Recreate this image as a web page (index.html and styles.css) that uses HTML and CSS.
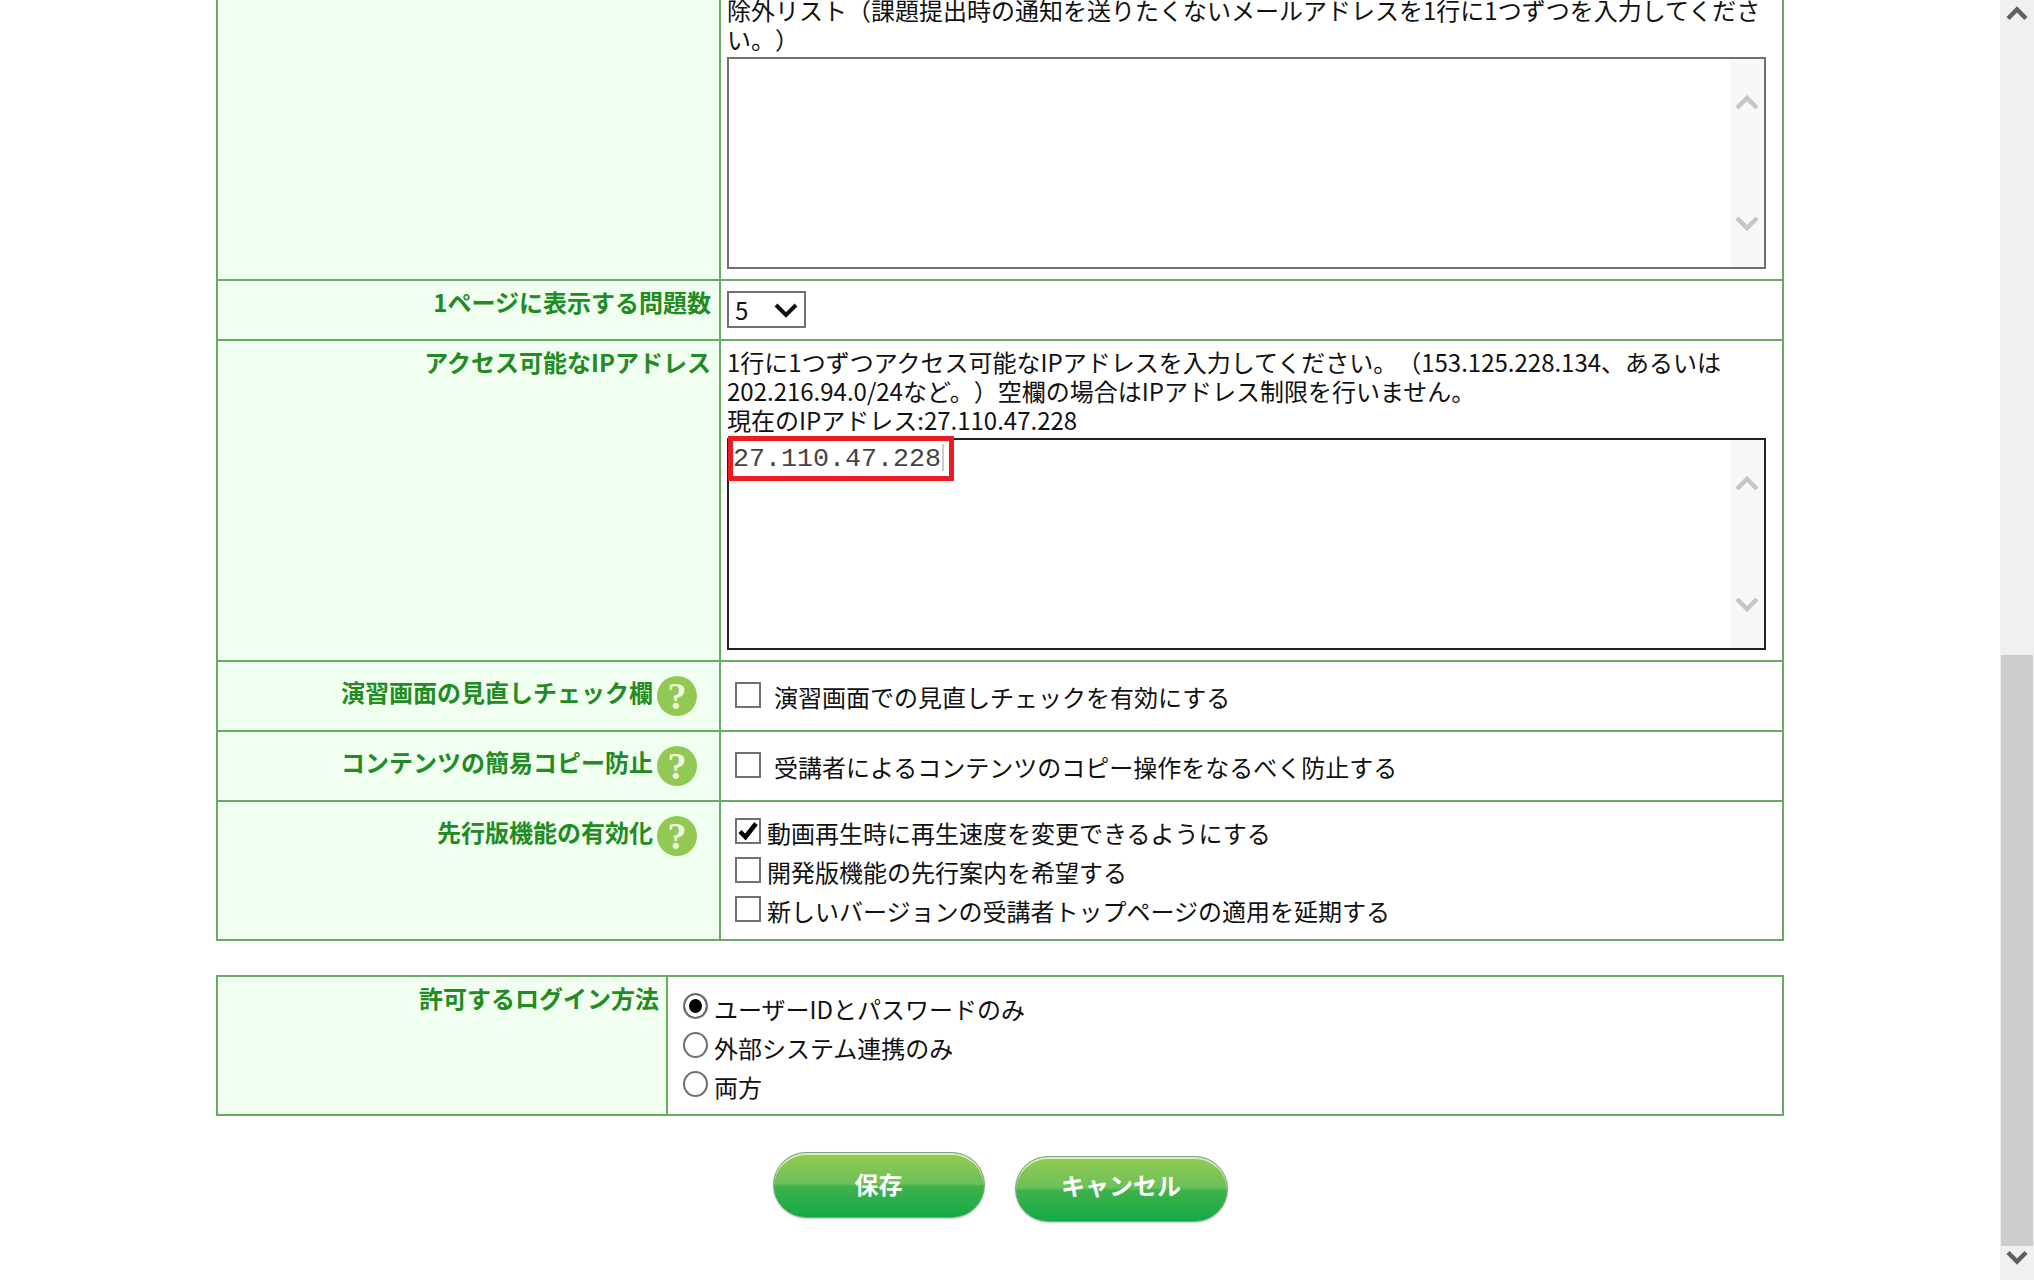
FILE: index.html
```html
<!DOCTYPE html>
<html lang="ja">
<head>
<meta charset="utf-8">
<title>設定</title>
<link rel="stylesheet" href="styles.css">
</head>
<body>
<div class="page">
  <main class="main">
    <table class="form-table first">
      <colgroup><col class="col-a"><col></colgroup>
      <tr class="r-exclude">
        <th></th>
        <td>
          <p class="text exclude-text">除外リスト（課題提出時の通知を送りたくないメールアドレスを1行に1つずつを入力してください。）</p>
          <div class="textbox">
            <div class="textbox-body"></div>
            <div class="mini-scroll">
              <svg class="chev" viewBox="0 0 24 18"><path d="M2 15 12 5l10 10"/></svg>
              <svg class="chev" viewBox="0 0 24 18"><path d="M2 3l10 10L22 3"/></svg>
            </div>
          </div>
        </td>
      </tr>
      <tr class="r-select">
        <th><div class="label">1ページに表示する問題数</div></th>
        <td>
          <div class="select"><span>5</span>
            <svg class="select-arrow" viewBox="0 0 24 16"><path d="M2 3l10 10L22 3"/></svg>
          </div>
        </td>
      </tr>
      <tr class="r-ip">
        <th><div class="label">アクセス可能なIPアドレス</div></th>
        <td class="ip-cell">
          <p class="text">1行に1つずつアクセス可能なIPアドレスを入力してください。（153.125.228.134、あるいは<br>202.216.94.0/24など。）空欄の場合はIPアドレス制限を行いません。<br>現在のIPアドレス:27.110.47.228</p>
          <div class="textbox focused">
            <div class="textbox-body mono">27.110.47.228<span class="caret"></span></div>
            <div class="mini-scroll">
              <svg class="chev" viewBox="0 0 24 18"><path d="M2 15 12 5l10 10"/></svg>
              <svg class="chev" viewBox="0 0 24 18"><path d="M2 3l10 10L22 3"/></svg>
            </div>
            <div class="highlight"></div>
          </div>
        </td>
      </tr>
      <tr class="r-check">
        <th>
          <div class="label with-help"><span>演習画面の見直しチェック欄</span>
            <svg class="help" viewBox="0 0 40 40"><circle cx="20" cy="20" r="20"/><text x="20" y="33" text-anchor="middle">?</text></svg>
          </div>
        </th>
        <td><label class="opt single"><input type="checkbox"><span>演習画面での見直しチェックを有効にする</span></label></td>
      </tr>
      <tr class="r-check">
        <th>
          <div class="label with-help"><span>コンテンツの簡易コピー防止</span>
            <svg class="help" viewBox="0 0 40 40"><circle cx="20" cy="20" r="20"/><text x="20" y="33" text-anchor="middle">?</text></svg>
          </div>
        </th>
        <td><label class="opt single"><input type="checkbox"><span>受講者によるコンテンツのコピー操作をなるべく防止する</span></label></td>
      </tr>
      <tr class="r-multi">
        <th>
          <div class="label with-help"><span>先行版機能の有効化</span>
            <svg class="help" viewBox="0 0 40 40"><circle cx="20" cy="20" r="20"/><text x="20" y="33" text-anchor="middle">?</text></svg>
          </div>
        </th>
        <td class="opts">
          <label class="opt"><input type="checkbox" checked><span>動画再生時に再生速度を変更できるようにする</span></label>
          <label class="opt"><input type="checkbox"><span>開発版機能の先行案内を希望する</span></label>
          <label class="opt"><input type="checkbox"><span>新しいバージョンの受講者トップページの適用を延期する</span></label>
        </td>
      </tr>
    </table>

    <table class="form-table second">
      <colgroup><col class="col-b"><col></colgroup>
      <tr class="r-login">
        <th><div class="label">許可するログイン方法</div></th>
        <td class="opts radios">
          <label class="opt"><input type="radio" name="login" checked><span>ユーザーIDとパスワードのみ</span></label>
          <label class="opt"><input type="radio" name="login"><span>外部システム連携のみ</span></label>
          <label class="opt"><input type="radio" name="login"><span>両方</span></label>
        </td>
      </tr>
    </table>

    <div class="actions">
      <button class="btn" type="button">保存</button>
      <button class="btn cancel" type="button">キャンセル</button>
    </div>
  </main>

  <aside class="scrollbar">
    <div class="track-top">
      <svg class="page-chev" viewBox="0 0 22 16"><path d="M2 13.5 11 4.5l9 9"/></svg>
    </div>
    <div class="thumb"></div>
    <div class="track-bottom">
      <svg class="page-chev" viewBox="0 0 22 16"><path d="M2 2.5l9 9 9-9"/></svg>
    </div>
  </aside>
</div>
</body>
</html>
```

FILE: styles.css
```css
* { box-sizing: border-box; }
html, body { margin: 0; height: 1280px; overflow: hidden; background: #fff; }
body {
  font-family: "Noto Sans CJK JP", "Liberation Sans", sans-serif;
  font-size: 24px;
  line-height: 29px;
  color: #111;
  text-spacing-trim: space-all;
}
.page { display: flex; height: 1280px; overflow: hidden; }
.main { flex: 1; min-width: 0; padding: 0 216px; }

.form-table {
  width: 100%;
  table-layout: fixed;
  border-collapse: separate;
  border-spacing: 0;
  border-right: 2px solid #6aaa64;
  border-bottom: 2px solid #6aaa64;
  border-left: 2px solid #6aaa64;
}
.form-table.first { margin-top: -12px; }
.form-table.second { margin-top: 34px; border-top: 2px solid #6aaa64; }
.col-a { width: 503px; }
.col-b { width: 450px; }
th, td { padding: 0; vertical-align: top; font-weight: normal; }
th {
  background: #f0fff0;
  border-right: 2px solid #6aaa64;
}
tr + tr th, tr + tr td { border-top: 2px solid #6aaa64; }

.r-exclude { height: 291px; }
.r-select { height: 60px; }
.r-ip { height: 321px; }
.r-check { height: 70px; }
.r-multi { height: 139px; }
.r-login { height: 137px; }

.label {
  padding: 6px 8px 0 0;
  text-align: right;
  color: #228b22;
  font-weight: 700;
}
.with-help {
  display: flex;
  justify-content: flex-end;
  align-items: flex-start;
  padding: 0 22px 0 0;
  gap: 4px;
}
.with-help span { padding-top: 15px; }
.help { width: 40px; height: 40px; margin-top: 14px; flex: none; }
.help circle { fill: #92c955; }
.help text { fill: #eef6df; font: 700 38px "Liberation Serif", serif; }
.second .label { padding-right: 7px; padding-top: 6px; }

td { padding-left: 6px; }
.text { margin: 0; }
.exclude-text { padding: 7px 12px 0 0; }
.ip-cell .text { padding: 6px 0 4px; }

.textbox {
  position: relative;
  display: flex;
  width: 1039px;
  height: 212px;
  margin-top: 4px;
  border: 2px solid #707070;
  background: #fff;
}
.textbox.focused { border-color: #222; margin-top: 0; }
.textbox-body { flex: 1; }
.mono {
  padding: 4px 4px 0;
  font-family: "Liberation Mono", monospace;
  font-size: 26.67px;
  line-height: 30px;
  color: #444;
}
.caret {
  display: inline-block;
  width: 2px;
  height: 27px;
  margin-left: 1px;
  vertical-align: -5px;
  background: #ccc;
}
.highlight {
  position: absolute;
  left: -1px;
  top: -4px;
  width: 226px;
  height: 45px;
  border: 5px solid #ed1c24;
}
.mini-scroll {
  display: flex;
  flex-direction: column;
  justify-content: space-between;
  align-items: center;
  width: 34px;
  padding: 34px 0;
  background: #f8f8f8;
}
.chev { width: 24px; height: 18px; display: block; }
.chev path { fill: none; stroke: #c6c6c6; stroke-width: 4.5; }

.select {
  display: flex;
  align-items: center;
  justify-content: space-between;
  width: 79px;
  height: 37px;
  margin-top: 10px;
  padding: 0 6px 0 6px;
  border: 2px solid #707070;
  background: #fff;
  color: #111;
}
.select-arrow { width: 24px; height: 16px; display: block; }
.select-arrow path { fill: none; stroke: #111; stroke-width: 4; }

.opt { display: flex; align-items: flex-start; }
.opt input {
  appearance: none;
  flex: none;
  width: 26px;
  height: 26px;
  margin: 0 6px 0 8px;
  border: 2px solid #707070;
  background: #fff;
}
.opt input[type="checkbox"]:checked {
  background: #fff url("data:image/svg+xml,%3Csvg xmlns='http://www.w3.org/2000/svg' viewBox='0 0 22 22'%3E%3Cpath d='M3 11.5l5.5 5.5L19 3.5' fill='none' stroke='%23000' stroke-width='4.5'/%3E%3C/svg%3E") center / 22px 22px no-repeat;
}
.opt input[type="radio"] {
  border-radius: 50%;
  margin: 0 6px 0 10px;
  width: 25px;
  border-width: 2px;
}
.opt input[type="radio"]:checked {
  box-shadow: inset 0 0 0 4px #fff;
  background: #000;
}
.single { padding-top: 20px; }
.single input { margin-right: 13px; }
.opts { padding-top: 16px; }
.opts .opt { height: 39px; }
.radios { padding-top: 16px; padding-left: 5px; }
.radios .opt span { padding-top: 1px; }

.actions { display: flex; justify-content: center; align-items: flex-start; gap: 30px; margin-top: 36px; }
.btn {
  width: 212px;
  height: 66px;
  padding: 0 0 2px;
  border: 1px solid #7fa57f;
  border-radius: 33px;
  box-shadow: inset 0 2px 0 rgba(255, 255, 255, 0.65), 0 1px 2px rgba(0, 0, 0, 0.18);
  background: linear-gradient(#93cb52 0%, #6cc058 48%, #3fb24a 52%, #12ab47 100%);
  color: #fff;
  font: 700 24px/30px "Noto Sans CJK JP", "Liberation Sans", sans-serif;
}
.btn.cancel { margin-top: 4px; width: 213px; padding-bottom: 8px; }

.scrollbar { flex: none; width: 34px; display: flex; flex-direction: column; background: #f0f0f0; }
.track-top { height: 655px; display: flex; justify-content: center; align-items: flex-start; padding-top: 5px; }
.thumb { height: 591px; margin: 0 1px; background: #cdcdcd; }
.track-bottom { flex: 1; display: flex; justify-content: center; align-items: flex-start; padding-top: 4px; }
.page-chev { width: 22px; height: 16px; display: block; }
.page-chev path { fill: none; stroke: #606060; stroke-width: 4.5; }
```
